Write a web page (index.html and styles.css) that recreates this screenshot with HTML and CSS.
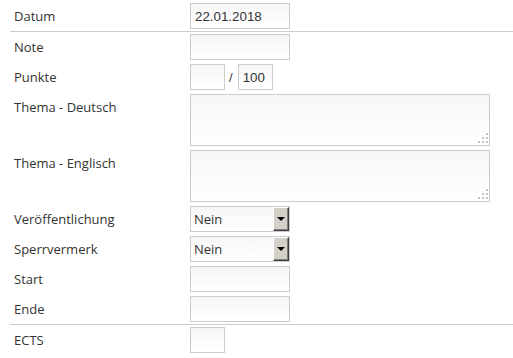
FILE: index.html
```html
<!DOCTYPE html>
<html lang="de">
<head>
    <meta charset="UTF-8">
    <title>Arbeit bearbeiten</title>
    <link rel="stylesheet" href="styles.css">
</head>
<body>
    <form class="entry-form">
        <div class="row sep">
            <label class="label" for="datum">Datum</label>
            <div class="field"><input class="text" id="datum" value="22.01.2018"></div>
        </div>
        <div class="row">
            <label class="label" for="note">Note</label>
            <div class="field"><input class="text" id="note"></div>
        </div>
        <div class="row">
            <label class="label" for="punkte">Punkte</label>
            <div class="field">
                <input class="text short" id="punkte">
                <span class="slash">/</span>
                <input class="text short" value="100">
            </div>
        </div>
        <div class="row">
            <label class="label" for="thema-de">Thema - Deutsch</label>
            <div class="field">
                <span class="area-wrap">
                    <textarea class="area" id="thema-de"></textarea>
                    <svg class="grip" width="10" height="10" viewBox="0 0 10 10"><rect x="8" y="0" width="2" height="2"/><rect x="4" y="4" width="2" height="2"/><rect x="8" y="4" width="2" height="2"/><rect x="0" y="8" width="2" height="2"/><rect x="4" y="8" width="2" height="2"/><rect x="8" y="8" width="2" height="2"/></svg>
                </span>
            </div>
        </div>
        <div class="row">
            <label class="label" for="thema-en">Thema - Englisch</label>
            <div class="field">
                <span class="area-wrap">
                    <textarea class="area" id="thema-en"></textarea>
                    <svg class="grip" width="10" height="10" viewBox="0 0 10 10"><rect x="8" y="0" width="2" height="2"/><rect x="4" y="4" width="2" height="2"/><rect x="8" y="4" width="2" height="2"/><rect x="0" y="8" width="2" height="2"/><rect x="4" y="8" width="2" height="2"/><rect x="8" y="8" width="2" height="2"/></svg>
                </span>
            </div>
        </div>
        <div class="row">
            <label class="label" for="veroeff">Veröffentlichung</label>
            <div class="field">
                <span class="select-wrap">
                    <select class="select" id="veroeff"><option>Nein</option><option>Ja</option></select>
                    <span class="drop-btn"></span>
                </span>
            </div>
        </div>
        <div class="row">
            <label class="label" for="sperr">Sperrvermerk</label>
            <div class="field">
                <span class="select-wrap">
                    <select class="select" id="sperr"><option>Nein</option><option>Ja</option></select>
                    <span class="drop-btn"></span>
                </span>
            </div>
        </div>
        <div class="row">
            <label class="label" for="start">Start</label>
            <div class="field"><input class="text" id="start"></div>
        </div>
        <div class="row sep">
            <label class="label" for="ende">Ende</label>
            <div class="field"><input class="text" id="ende"></div>
        </div>
        <div class="row">
            <label class="label" for="ects">ECTS</label>
            <div class="field"><input class="text short" id="ects"></div>
        </div>
    </form>
</body>
</html>
```

FILE: styles.css
```css
/* Base */
html, body {
    margin: 0;
    padding: 0;
    background-color: #fff;
    font-family: "Open Sans", Arial, sans-serif;
    font-size: 13px;
    color: #333;
}

.entry-form {
    margin-left: 10px;
    padding-top: 1px;
}

.row {
    display: grid;
    grid-template-columns: 180px 1fr;
    padding: 2px 0;
}

.row.sep {
    border-bottom: 1px solid #ccc;
}

.label {
    padding-left: 4px;
    line-height: 26px;
    align-self: start;
}

.field {
    display: flex;
    align-items: center;
}

/* Inputs */
.text,
.area,
.select {
    box-sizing: border-box;
    border: 1px solid #ccc;
    border-radius: 0;
    background: linear-gradient(#f6f6f6, #fff);
    color: #333;
    margin: 0;
    outline: none;
}

.text {
    width: 100px;
    height: 26px;
    padding: 0 4px;
    font-family: "Liberation Sans", Arial, sans-serif;
    font-size: 13.33px;
}

.text.short {
    width: 35px;
}

.slash {
    font-family: "Liberation Sans", Arial, sans-serif;
    margin: 0 5px 0 4px;
}

.area-wrap {
    position: relative;
    display: block;
    width: 300px;
    height: 52px;
}

.area {
    display: block;
    width: 300px;
    height: 52px;
    resize: none;
    padding: 4px;
}

.grip {
    position: absolute;
    right: 2px;
    bottom: 3px;
    fill: #c4c4c4;
}

/* Selects */
.select-wrap {
    position: relative;
    display: block;
    width: 100px;
    height: 26px;
}

.select {
    appearance: none;
    -webkit-appearance: none;
    width: 100px;
    height: 26px;
    padding: 0 3px;
    font-family: "Open Sans", Arial, sans-serif;
    font-size: 13px;
}

.drop-btn {
    position: absolute;
    top: 1px;
    right: 1px;
    width: 16px;
    height: 24px;
    box-sizing: border-box;
    background-color: #d4d0c8;
    border: 1px solid;
    border-color: #fff #404040 #404040 #fff;
    box-shadow: inset -1px -1px 0 #808080;
    pointer-events: none;
}

.drop-btn::after {
    content: "";
    position: absolute;
    left: 3px;
    top: 9px;
    border-left: 4px solid transparent;
    border-right: 4px solid transparent;
    border-top: 4px solid #000;
}
```
